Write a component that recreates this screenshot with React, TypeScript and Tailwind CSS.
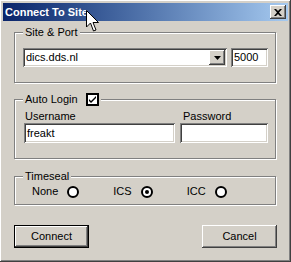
import type { ReactNode } from "react";

const sunken =
  "shadow-[inset_1px_1px_#808080,inset_-1px_-1px_#ffffff,inset_2px_2px_#404040,inset_-2px_-2px_#d4d0c8]";
const raised =
  "shadow-[inset_-1px_-1px_#404040,inset_1px_1px_#ffffff,inset_-2px_-2px_#808080,inset_2px_2px_#d4d0c8]";
const etched = "border border-[#808080] shadow-[inset_1px_1px_#ffffff,1px_1px_#ffffff]";

function Group({
  title,
  extra,
  className,
  children,
}: {
  title: string;
  extra?: ReactNode;
  className: string;
  children: ReactNode;
}) {
  return (
    <div className={`relative ${etched} ${className}`}>
      <div className="absolute left-[8px] top-[-7px] flex h-[13px] items-center gap-[8px] bg-[#d4d0c8] px-[2px]">
        <span>{title}</span>
        {extra}
      </div>
      {children}
    </div>
  );
}

function Radio({ label, checked }: { label: string; checked?: boolean }) {
  return (
    <div className="flex items-center gap-[9px]">
      <span>{label}</span>
      <span className="flex h-[12px] w-[12px] items-center justify-center rounded-full border-2 border-black bg-white">
        {checked && <span className="h-[4px] w-[4px] rounded-full bg-black" />}
      </span>
    </div>
  );
}

export default function App() {
  return (
    <div
      className={`relative h-[262px] w-[291px] bg-[#d4d0c8] p-[3px] font-['Liberation_Sans',Arial,sans-serif] text-[11px] leading-[13px] text-black ${raised}`}
    >
      {/* title bar */}
      <div className="flex h-[18px] items-center justify-between bg-gradient-to-r from-[#0a246a] to-[#a6caf0] pl-[2px] pr-[2px]">
        <span className="text-[11px] font-bold text-white">Connect To Site</span>
        <button className={`flex h-[14px] w-[16px] items-center justify-center bg-[#d4d0c8] ${raised}`}>
          <svg width="8" height="7" viewBox="0 0 8 7">
            <path d="M0 0h2l2 2 2-2h2L5 3.5 8 7H6L4 5 2 7H0l3-3.5z" fill="#000" />
          </svg>
        </button>
      </div>

      <div className="pl-[11px] pr-[12px] pt-[11px]">
        <Group title="Site & Port" className="pb-[15px] pl-[8px] pr-[7px] pt-[15px]">
          <div className="flex gap-[4px]">
            <div className={`flex h-[19px] w-[204px] items-center justify-between bg-white pl-[3px] pr-[2px] ${sunken}`}>
              <span>dics.dds.nl</span>
              <span className={`flex h-[15px] w-[16px] items-center justify-center bg-[#d4d0c8] ${raised}`}>
                <svg width="7" height="4" viewBox="0 0 7 4">
                  <path d="M0 0h7L3.5 4z" fill="#000" />
                </svg>
              </span>
            </div>
            <div className={`flex h-[19px] w-[37px] items-center bg-white pl-[3px] ${sunken}`}>5000</div>
          </div>
        </Group>

        <Group
          title="Auto Login"
          className="mt-[16px] pb-[15px] pl-[9px] pr-[7px] pt-[10px]"
          extra={
            <span className="flex h-[13px] w-[13px] items-center justify-center border-2 border-black bg-white">
              <svg width="9" height="9" viewBox="0 0 9 9">
                <path d="M1 4l2 2 5-5v2L3 8 1 6z" fill="#000" />
              </svg>
            </span>
          }
        >
          <div className="flex gap-[5px]">
            <div className="flex w-[151px] flex-col">
              <span className="pl-[1px]">Username</span>
              <div className={`flex h-[20px] items-center bg-white pl-[3px] ${sunken}`}>freakt</div>
            </div>
            <div className="flex w-[88px] flex-col">
              <span className="pl-[3px]">Password</span>
              <div className={`h-[20px] bg-white ${sunken}`} />
            </div>
          </div>
        </Group>

        <Group title="Timeseal" className="mt-[17px] pb-[6px] pl-[17px] pt-[8px]">
          <div className="flex h-[13px] items-center gap-[34px]">
            <Radio label="None" />
            <Radio label="ICS" checked />
            <Radio label="ICC" />
          </div>
        </Group>

        <div className="mt-[20px] flex justify-between pr-[-1px]">
          <button className={`h-[23px] w-[75px] border border-black bg-[#d4d0c8] ${raised}`}>Connect</button>
          <button className={`-mr-[1px] h-[23px] w-[75px] bg-[#d4d0c8] ${raised}`}>Cancel</button>
        </div>
      </div>

      {/* mouse pointer */}
      <svg className="absolute left-[86px] top-[10px]" width="13" height="22" viewBox="0 0 13 22">
        <path d="M0.5 0.5V17L4.5 13L7.5 21L10 20L7 12.5H12.5Z" fill="#fff" stroke="#000" strokeWidth="1" />
      </svg>
    </div>
  );
}
